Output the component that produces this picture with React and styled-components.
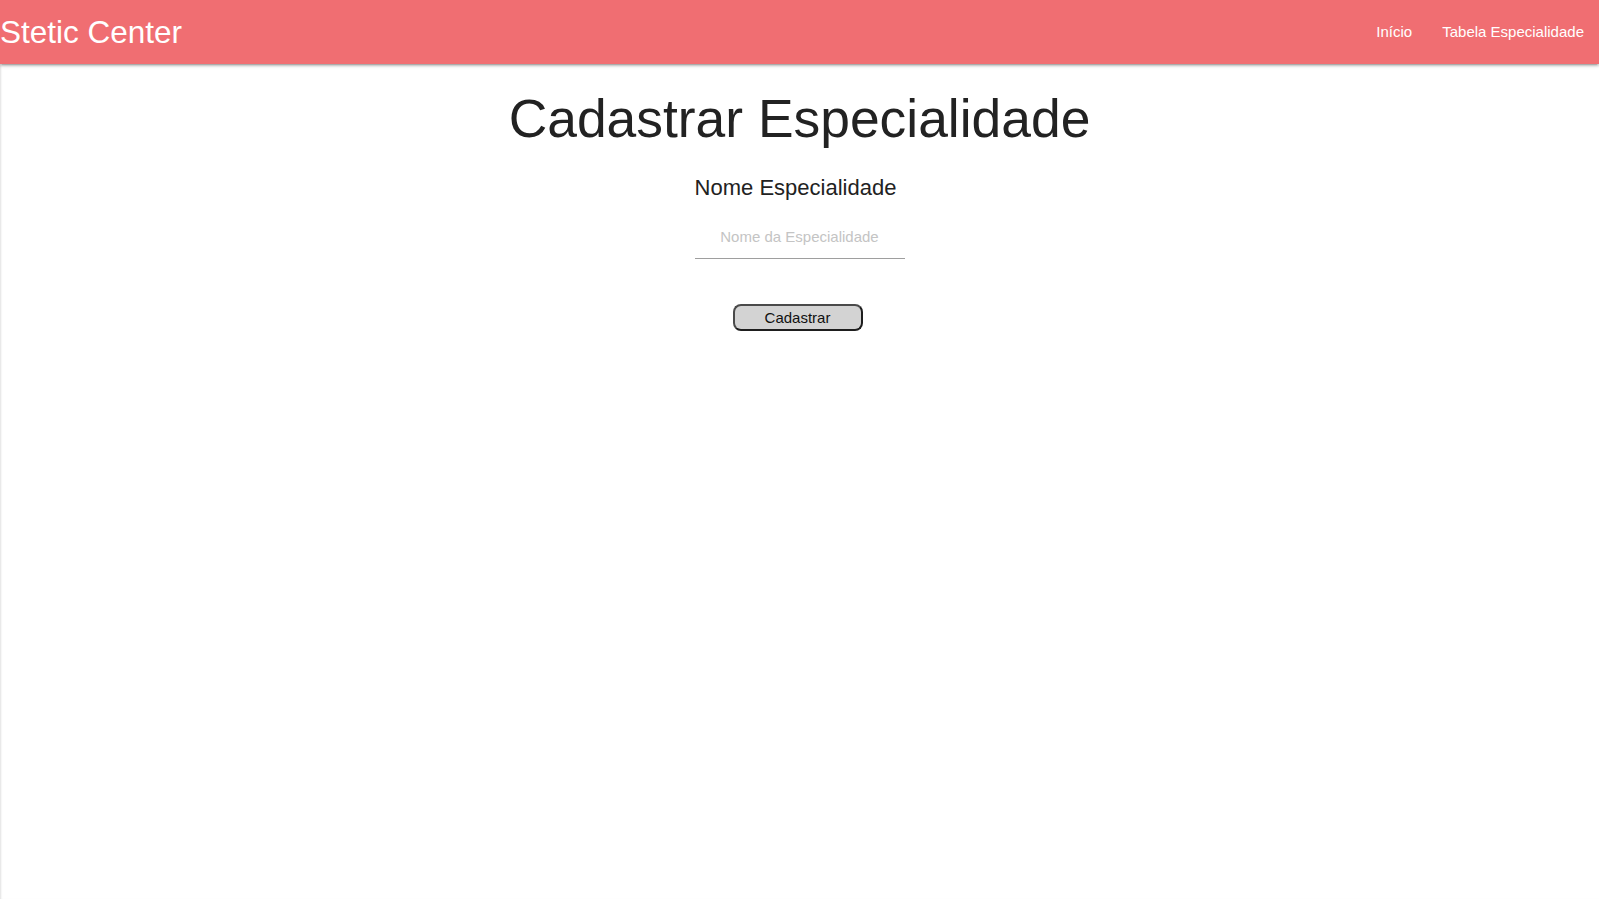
import React from 'react';
import styled, { createGlobalStyle } from 'styled-components';

const GlobalStyle = createGlobalStyle`
  html, body {
    margin: 0;
    padding: 0;
    background: #fff;
    font-family: 'Liberation Sans', Arial, sans-serif;
  }
`;

const Nav = styled.nav`
  position: relative;
  z-index: 2;
  display: flex;
  align-items: center;
  justify-content: space-between;
  height: 64px;
  line-height: 64px;
  background-color: #f06e72;
  color: #fff;
  box-shadow: 0 2px 2px 0 rgba(0, 0, 0, 0.14), 0 3px 1px -2px rgba(0, 0, 0, 0.12),
    0 1px 5px 0 rgba(0, 0, 0, 0.2);
`;

const Brand = styled.a`
  font-size: 31.5px;
  color: #fff;
  text-decoration: none;
  white-space: nowrap;
`;

const NavList = styled.ul`
  display: flex;
  margin: 0;
  padding: 0;
  list-style: none;
`;

const NavLink = styled.a`
  display: block;
  padding: 0 15px;
  font-size: 15px;
  color: #fff;
  text-decoration: none;
`;

const Main = styled.main`
  display: flex;
  flex-direction: column;
  align-items: center;
  min-height: calc(100vh - 64px);
  box-shadow: inset 2px 0 2px -1px rgba(0, 0, 0, 0.12);
`;

const Title = styled.h2`
  margin: 26px 0 0;
  font-size: 53.4px;
  font-weight: 400;
  line-height: 110%;
  color: #222;
`;

const Form = styled.form`
  display: flex;
  flex-direction: column;
  align-items: center;
`;

const Label = styled.label`
  margin: 26px 8px 0 0;
  font-size: 22px;
  line-height: 1.15;
  color: #222;
`;

const Input = styled.input`
  box-sizing: content-box;
  width: 210px;
  height: 44px;
  margin-top: 14px;
  padding: 0;
  border: none;
  border-bottom: 1px solid #9e9e9e;
  outline: none;
  background: transparent;
  font-family: inherit;
  font-size: 15px;
  text-align: center;
  color: #222;

  &::placeholder {
    color: #c4c4c4;
  }
`;

const Button = styled.button`
  width: 130px;
  height: 27px;
  margin: 45px 4px 0 0;
  padding: 0;
  border: 2px solid;
  border-color: #4a4a4a #1e1e1e #1e1e1e #4a4a4a;
  border-radius: 8px;
  background: #d3d3d3;
  font-family: inherit;
  font-size: 15px;
  color: #111;
  cursor: pointer;
`;

export default function App() {
  return (
    <>
      <GlobalStyle />
      <Nav>
        <Brand href='#'>Stetic Center</Brand>
        <NavList>
          <li>
            <NavLink href='#'>Início</NavLink>
          </li>
          <li>
            <NavLink href='#'>Tabela Especialidade</NavLink>
          </li>
        </NavList>
      </Nav>
      <Main>
        <Title>Cadastrar Especialidade</Title>
        <Form onSubmit={(e) => e.preventDefault()}>
          <Label htmlFor='nome'>Nome Especialidade</Label>
          <Input id='nome' type='text' placeholder='Nome da Especialidade' />
          <Button type='submit'>Cadastrar</Button>
        </Form>
      </Main>
    </>
  );
}
